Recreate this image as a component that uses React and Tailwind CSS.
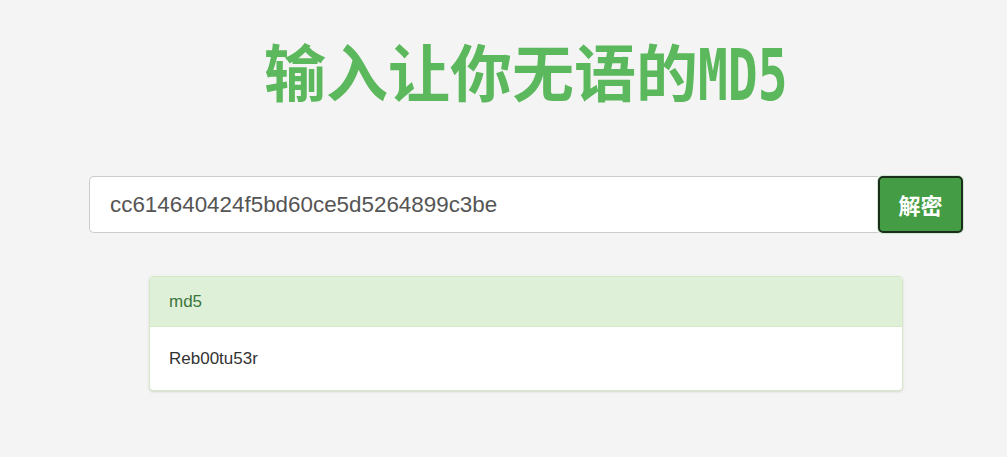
export default function App() {
  return (
    <div
      className="min-h-[457px] w-full bg-[#f4f4f4] pt-[29px]"
      style={{ fontFamily: '"Liberation Sans", Arial, "Noto Sans CJK SC", sans-serif' }}
    >
      <div className="ml-[89px] w-[874px]">
        {/* 标题 */}
        <h1
          className="h-[82px] whitespace-nowrap text-center text-[62px] leading-[82px] font-bold text-[#5cb85c]"
          style={{ fontFamily: '"Noto Sans CJK SC", sans-serif' }}
        >
          输入让你无语的
          <span
            className="inline-block w-[90px] origin-left scale-x-[0.8] scale-y-[1.15] text-left font-bold"
            style={{ fontFamily: '"DejaVu Sans Mono", monospace' }}
          >
            MD5
          </span>
        </h1>

        {/* 输入框 + 按钮 */}
        <div className="mt-[65px] flex h-[57px]">
          <div className="flex flex-1 items-center rounded-l-[5px] border border-r-0 border-[#cccccc] bg-white pl-[20px] text-[22.4px] text-[#555555]">
            cc614640424f5bd60ce5d5264899c3be
          </div>
          <button className="flex w-[85px] items-center justify-center rounded-[5px] border-2 border-[#1b2e1b] bg-[#449d44] text-[22px] font-bold text-white ring-1 ring-[#cfe7cf]">
            <span style={{ fontFamily: '"Noto Sans CJK SC", sans-serif' }}>解密</span>
          </button>
        </div>

        {/* 结果面板 */}
        <div className="mx-[60px] mt-[43px] overflow-hidden rounded-[4px] border border-[#d6e9c6] bg-white shadow-sm">
          <div className="flex h-[50px] items-center border-b border-[#d6e9c6] bg-[#dff0d8] px-[19px] text-[17px] text-[#3c763d]">
            md5
          </div>
          <div className="flex h-[63px] items-center px-[19px] text-[17px] text-[#333333]">
            Reb00tu53r
          </div>
        </div>
      </div>
    </div>
  );
}
